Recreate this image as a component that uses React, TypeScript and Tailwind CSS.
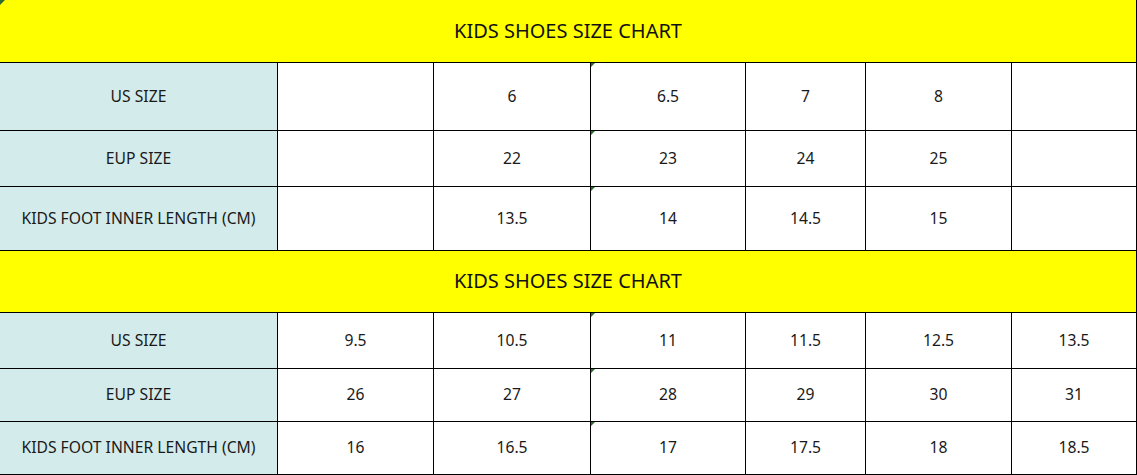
const cols = ['w-[278px]', 'w-[156px]', 'w-[157px]', 'w-[155px]', 'w-[120px]', 'w-[146px]', 'w-[125px]'];

type Row = { h: string; cells: string[] };

const table1: Row[] = [
  { h: 'h-[68px]', cells: ['US SIZE', '', '6', '6.5', '7', '8', ''] },
  { h: 'h-[56px]', cells: ['EUP SIZE', '', '22', '23', '24', '25', ''] },
  { h: 'h-[64px]', cells: ['KIDS FOOT INNER LENGTH (CM)', '', '13.5', '14', '14.5', '15', ''] },
];

const table2: Row[] = [
  { h: 'h-[56px]', cells: ['US SIZE', '9.5', '10.5', '11', '11.5', '12.5', '13.5'] },
  { h: 'h-[53px]', cells: ['EUP SIZE', '26', '27', '28', '29', '30', '31'] },
  { h: 'h-[53px]', cells: ['KIDS FOOT INNER LENGTH (CM)', '16', '16.5', '17', '17.5', '18', '18.5'] },
];

function Marker() {
  return (
    <span className="absolute left-0 top-0 h-0 w-0 border-t-[4px] border-r-[4px] border-t-[#2e6b2e] border-r-transparent" />
  );
}

function Title({ h }: { h: string }) {
  return (
    <div className={`relative flex ${h} items-center justify-center border-b border-r border-black bg-[#ffff00] pb-[1px] text-[20px] text-[#111]`}>
      KIDS SHOES SIZE CHART
    </div>
  );
}

function DataRow({ row }: { row: Row }) {
  return (
    <div className={`flex ${row.h}`}>
      {row.cells.map((c, i) => (
        <div
          key={i}
          className={`relative flex ${cols[i]} shrink-0 items-center justify-center border-b border-r border-black text-[15.7px] text-[#1a1a1a] ${
            i === 0 ? 'bg-[#d4ebeb]' : 'bg-white'
          }`}
        >
          {i === 3 && <Marker />}
          {c}
        </div>
      ))}
    </div>
  );
}

export default function App() {
  return (
    <div className="relative w-[1137px] h-[475px] overflow-hidden bg-white font-['Noto_Sans',sans-serif]">
      <Title h="h-[63px]" />
      {table1.map((r, i) => (
        <DataRow key={i} row={r} />
      ))}
      <Title h="h-[62px]" />
      {table2.map((r, i) => (
        <DataRow key={i} row={r} />
      ))}
      <span className="absolute left-0 top-0 h-0 w-0 border-t-[5px] border-r-[5px] border-t-[#2e6b2e] border-r-transparent" />
    </div>
  );
}
